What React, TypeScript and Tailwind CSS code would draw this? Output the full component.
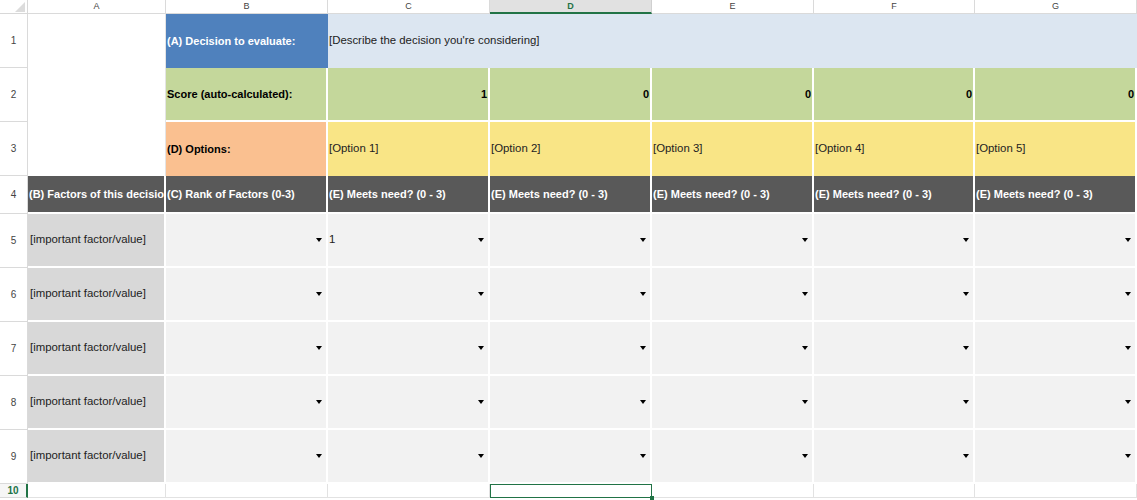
import React from "react";

const cols = ["A", "B", "C", "D", "E", "F", "G"];
const options = ["[Option 1]", "[Option 2]", "[Option 3]", "[Option 4]", "[Option 5]"];
const scores = [1, 0, 0, 0, 0];

const Arrow = () => (
  <span className="w-0 h-0 border-l-[3px] border-r-[3px] border-t-[4px] border-l-transparent border-r-transparent border-t-black shrink-0" />
);

const DropCell = ({ value }: { value?: string }) => (
  <div className="bg-[#f2f2f2] border-r-2 border-b-2 border-white flex items-center justify-between pl-[1px] pr-[4px] text-[11.4px] text-[#222]">
    <span>{value ?? ""}</span>
    <Arrow />
  </div>
);

export default function App() {
  return (
    <div className="w-[1137px] h-[500px] bg-white overflow-hidden font-['Liberation_Sans',Arial,sans-serif] text-[11px] leading-none">
      <div className="grid grid-cols-[28px_138px_162px_162px_162px_162px_161px_162px] grid-rows-[14px_54px_54px_54px_38px_54px_54px_54px_54px_54px_14px]">
        {/* corner */}
        <div className="relative border-r border-b border-[#d8d8d8] bg-white">
          <span className="absolute right-[2px] bottom-[1px] w-0 h-0 border-l-[10px] border-b-[10px] border-l-transparent border-b-[#dcdcdc]" />
        </div>
        {cols.map((c) =>
          c === "D" ? (
            <div key={c} className="bg-[#e1e1e1] border-r border-b-2 border-r-[#d0d0d0] border-b-[#217346] flex items-center justify-center text-[9px] font-bold text-[#217346]">
              {c}
            </div>
          ) : (
            <div key={c} className="bg-white border-r border-b border-[#dadada] flex items-center justify-center text-[9px] text-[#444]">
              {c}
            </div>
          )
        )}

        {/* row 1 */}
        <RowHead n={1} />
        <div className="row-span-3 bg-white border-r border-[#e4e4e4]" />
        <div className="bg-[#4f81bd] flex items-center pl-[1px] font-bold text-white whitespace-nowrap">
          (A) Decision to evaluate:
        </div>
        <div className="col-span-5 bg-[#dce6f1] flex items-center pl-[1px] text-[11.4px] text-[#222]">
          [Describe the decision you're considering]
        </div>

        {/* row 2 */}
        <RowHead n={2} />
        <div className="bg-[#c4d79b] border-r-2 border-b-2 border-white flex items-center pl-[1px] font-bold text-black whitespace-nowrap">
          Score (auto-calculated):
        </div>
        {scores.map((s, i) => (
          <div key={i} className="bg-[#c4d79b] border-r-2 border-b-2 border-white flex items-center justify-end pr-[1px] font-bold text-black">
            {s}
          </div>
        ))}

        {/* row 3 */}
        <RowHead n={3} />
        <div className="bg-[#fac090] border-r-2 border-white flex items-center pl-[1px] font-bold text-black">
          (D) Options:
        </div>
        {options.map((o) => (
          <div key={o} className="bg-[#f9e586] border-r-2 border-white flex items-center pl-[1px] text-[11.4px] text-[#222] whitespace-nowrap">
            {o}
          </div>
        ))}

        {/* row 4 */}
        <RowHead n={4} />
        <div className="bg-[#595959] border-r-2 border-b-2 border-white flex items-center pl-[1px] font-bold text-white whitespace-nowrap overflow-hidden">
          (B) Factors of this decision
        </div>
        <div className="bg-[#595959] border-r-2 border-b-2 border-white flex items-center pl-[1px] font-bold text-white whitespace-nowrap overflow-hidden">
          (C) Rank of Factors (0-3)
        </div>
        {options.map((o) => (
          <div key={o} className="bg-[#595959] border-r-2 border-b-2 border-white flex items-center pl-[1px] font-bold text-white whitespace-nowrap overflow-hidden">
            (E) Meets need? (0 - 3)
          </div>
        ))}

        {/* rows 5-9 */}
        {[5, 6, 7, 8, 9].map((r) => (
          <React.Fragment key={r}>
            <RowHead n={r} />
            <div className="bg-[#d8d8d8] border-r-2 border-b-2 border-white flex items-center pl-[2px] text-[11.4px] text-[#222] whitespace-nowrap">
              [important factor/value]
            </div>
            <DropCell />
            {options.map((o, i) => (
              <DropCell key={o} value={r === 5 && i === 0 ? "1" : undefined} />
            ))}
          </React.Fragment>
        ))}

        {/* row 10 */}
        <div className="bg-[#f6f6f6] border-r-2 border-b border-r-[#217346] border-b-[#d8d8d8] flex items-center justify-center text-[10px] font-bold text-[#217346]">
          10
        </div>
        {cols.map((c) =>
          c === "D" ? (
            <div key={c} className="relative bg-white border-[1.5px] border-[#217346]">
              <span className="absolute -right-[3px] -bottom-[3px] w-[4px] h-[4px] bg-[#217346]" />
            </div>
          ) : (
            <div key={c} className="bg-white border-r border-b border-[#e2e2e2]" />
          )
        )}
      </div>
    </div>
  );
}

function RowHead({ n }: { n: number }) {
  return (
    <div className="bg-white border-r border-b border-[#dadada] flex items-center justify-center text-[10px] text-[#444]">
      {n}
    </div>
  );
}
